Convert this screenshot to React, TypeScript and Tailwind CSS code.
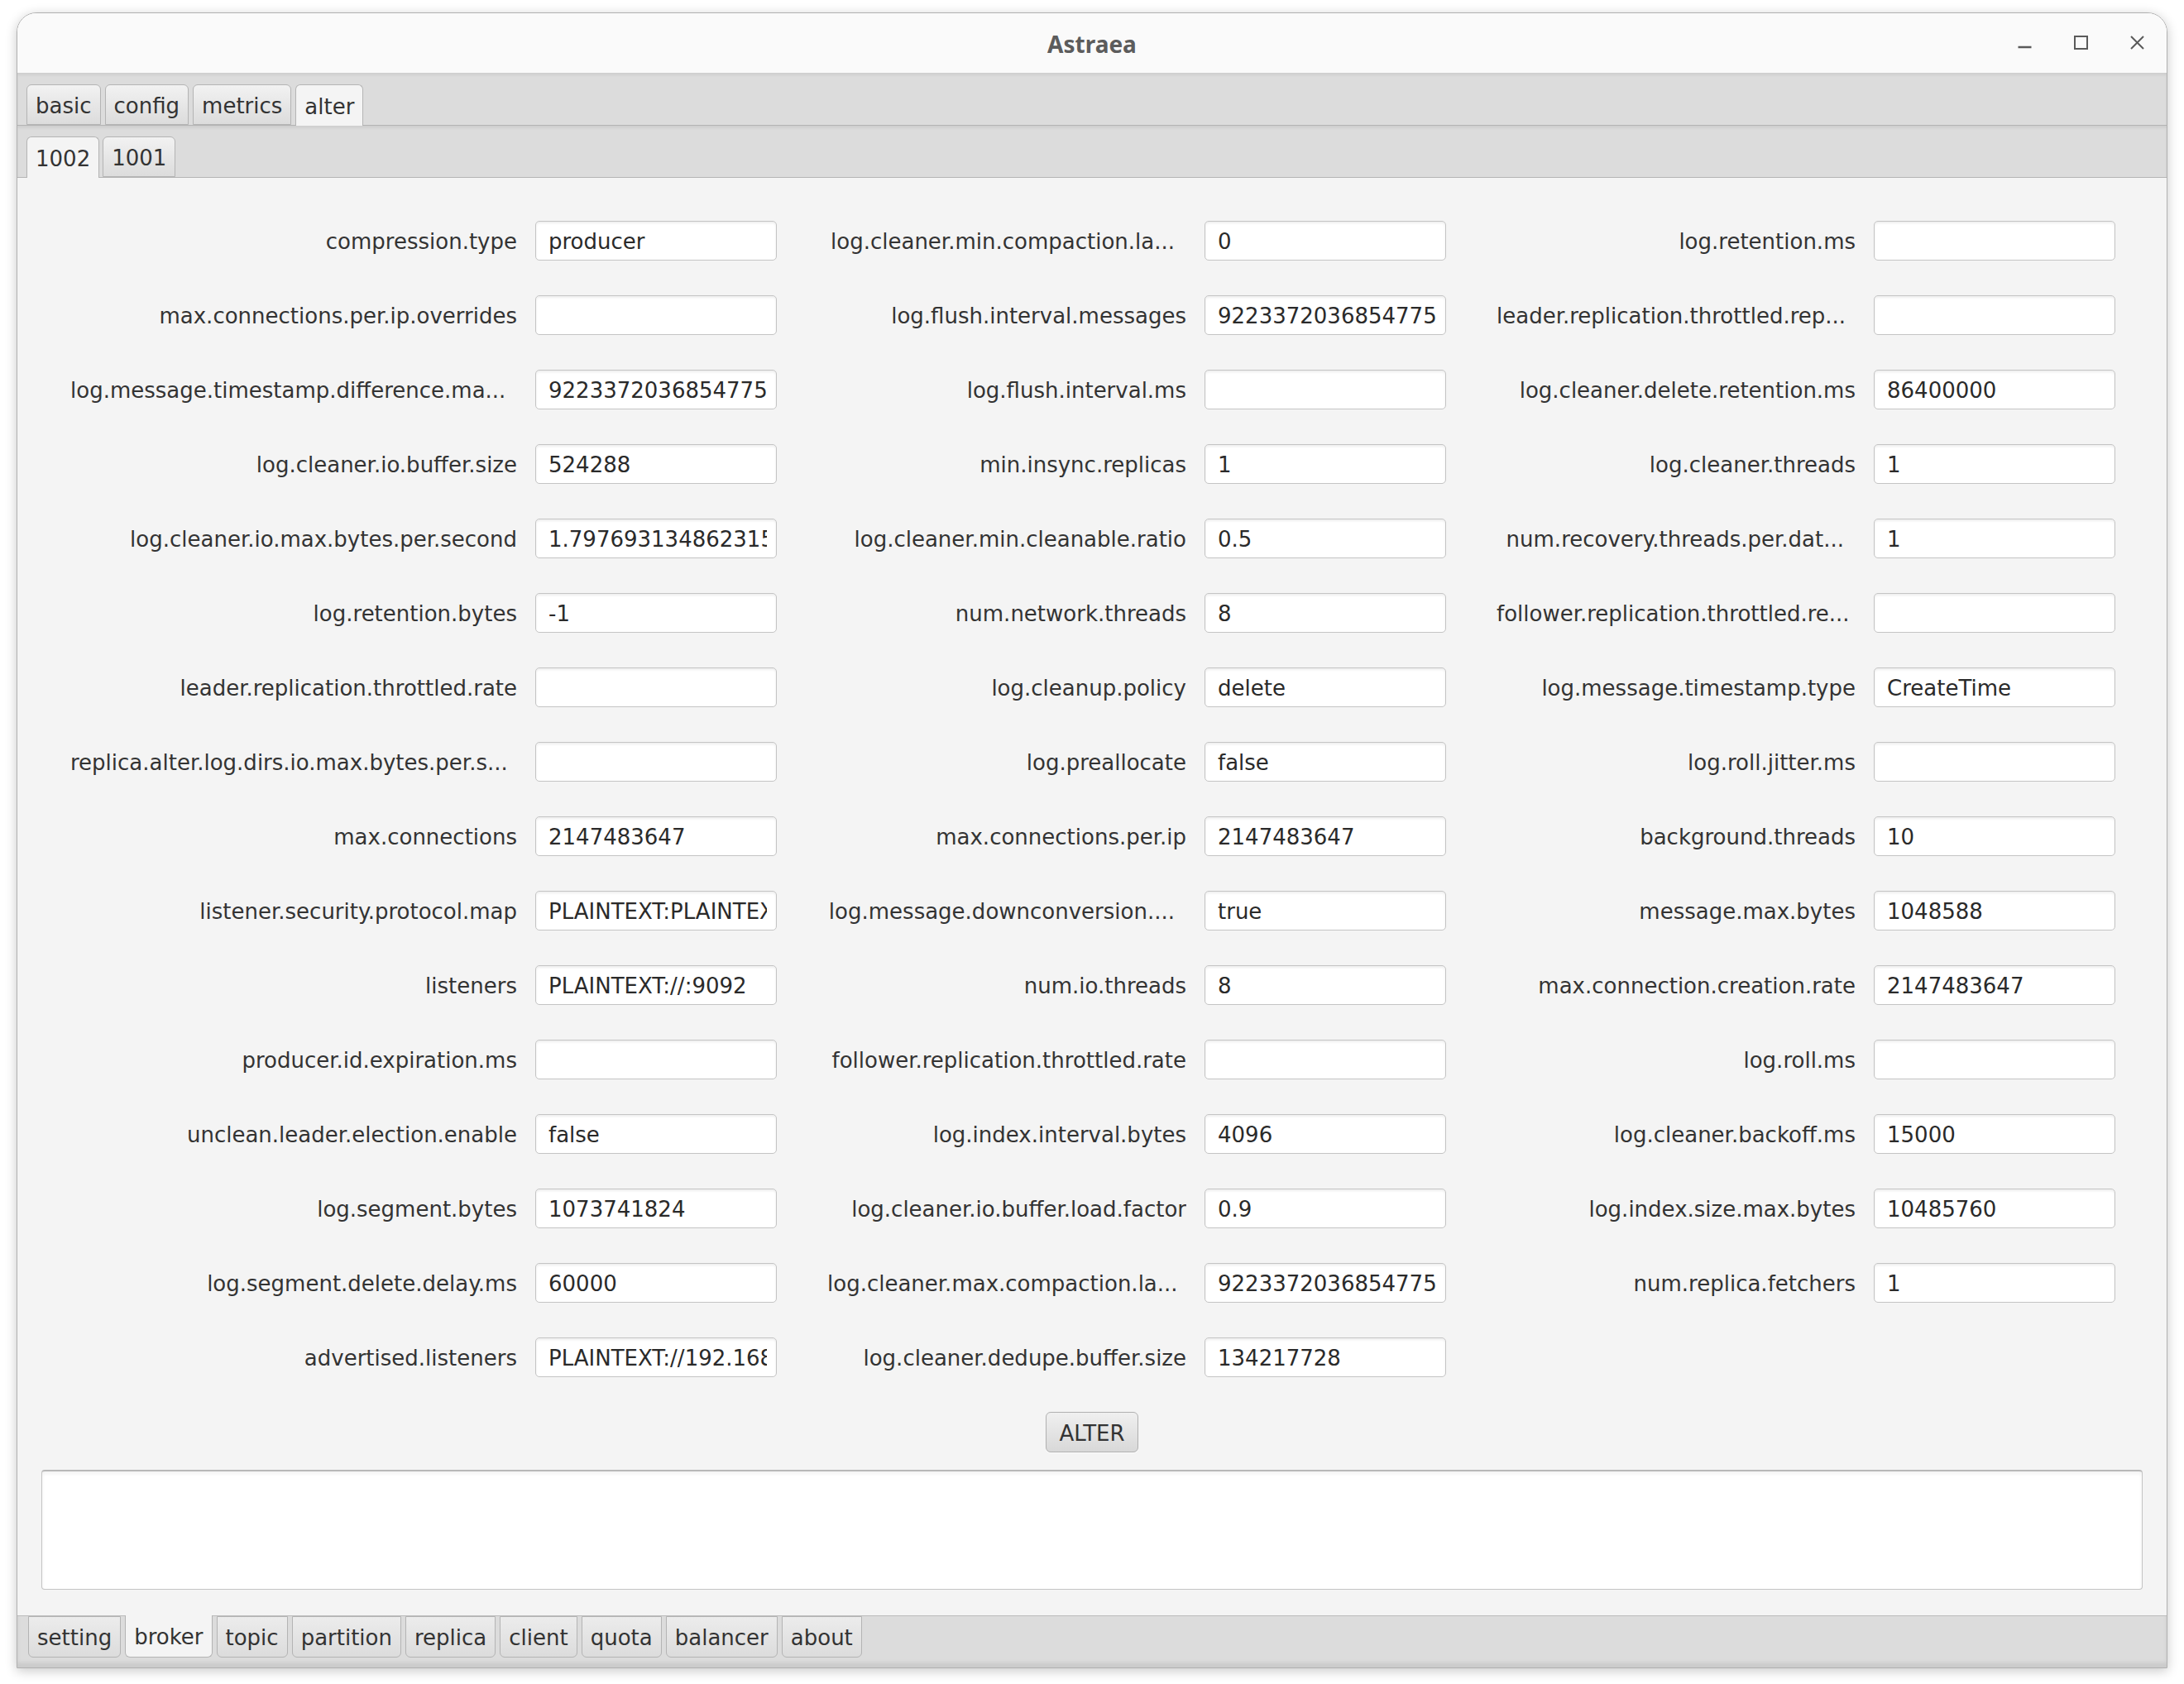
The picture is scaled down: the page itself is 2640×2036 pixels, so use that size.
const fields: [string, string][] = [
  ["compression.type", "producer"],
  ["log.cleaner.min.compaction.la...", "0"],
  ["log.retention.ms", ""],
  ["max.connections.per.ip.overrides", ""],
  ["log.flush.interval.messages", "9223372036854775807"],
  ["leader.replication.throttled.rep...", ""],
  ["log.message.timestamp.difference.ma...", "9223372036854775807"],
  ["log.flush.interval.ms", ""],
  ["log.cleaner.delete.retention.ms", "86400000"],
  ["log.cleaner.io.buffer.size", "524288"],
  ["min.insync.replicas", "1"],
  ["log.cleaner.threads", "1"],
  ["log.cleaner.io.max.bytes.per.second", "1.7976931348623157E308"],
  ["log.cleaner.min.cleanable.ratio", "0.5"],
  ["num.recovery.threads.per.dat...", "1"],
  ["log.retention.bytes", "-1"],
  ["num.network.threads", "8"],
  ["follower.replication.throttled.re...", ""],
  ["leader.replication.throttled.rate", ""],
  ["log.cleanup.policy", "delete"],
  ["log.message.timestamp.type", "CreateTime"],
  ["replica.alter.log.dirs.io.max.bytes.per.s...", ""],
  ["log.preallocate", "false"],
  ["log.roll.jitter.ms", ""],
  ["max.connections", "2147483647"],
  ["max.connections.per.ip", "2147483647"],
  ["background.threads", "10"],
  ["listener.security.protocol.map", "PLAINTEXT:PLAINTEXT,SSL:SSL"],
  ["log.message.downconversion....", "true"],
  ["message.max.bytes", "1048588"],
  ["listeners", "PLAINTEXT://:9092"],
  ["num.io.threads", "8"],
  ["max.connection.creation.rate", "2147483647"],
  ["producer.id.expiration.ms", ""],
  ["follower.replication.throttled.rate", ""],
  ["log.roll.ms", ""],
  ["unclean.leader.election.enable", "false"],
  ["log.index.interval.bytes", "4096"],
  ["log.cleaner.backoff.ms", "15000"],
  ["log.segment.bytes", "1073741824"],
  ["log.cleaner.io.buffer.load.factor", "0.9"],
  ["log.index.size.max.bytes", "10485760"],
  ["log.segment.delete.delay.ms", "60000"],
  ["log.cleaner.max.compaction.la...", "9223372036854775807"],
  ["num.replica.fetchers", "1"],
  ["advertised.listeners", "PLAINTEXT://192.168.1.10:9092"],
  ["log.cleaner.dedupe.buffer.size", "134217728"],
];

const tabBase =
  "flex items-center px-[10px] pt-[2px] border border-[#b4b4b4] text-[#333] whitespace-nowrap leading-[32px]";

function TopTab({ label, selected }: { label: string; selected?: boolean }) {
  return (
    <div
      className={
        tabBase +
        " rounded-t-[6px] " +
        (selected
          ? "h-[50px] -mb-px border-b-0 bg-[#f4f4f4]"
          : "h-[49px] bg-gradient-to-b from-[#f2f2f2] to-[#dcdcdc]")
      }
    >
      {label}
    </div>
  );
}

function BottomTab({ label, selected }: { label: string; selected?: boolean }) {
  return (
    <div
      className={
        tabBase +
        " rounded-b-[6px] " +
        (selected
          ? "h-[51px] -mt-px border-t-0 bg-[#f4f4f4]"
          : "h-[50px] bg-gradient-to-b from-[#ececec] to-[#dcdcdc]")
      }
    >
      {label}
    </div>
  );
}

function Field({ label, value, wide }: { label: string; value: string; wide?: boolean }) {
  const cut = label.endsWith("...");
  return (
    <div className="flex items-center gap-[22px] h-[90px]">
      <div
        className={
          (wide ? "w-[540px]" : "w-[434px]") +
          (cut ? " pr-[14px]" : "") +
          " text-right whitespace-nowrap overflow-hidden text-[#333] leading-[34px] pt-[2px]"
        }
      >
        {label}
      </div>
      <div className="w-[292px] h-[48px] bg-white border border-[#c4c4c4] rounded-[5px] pl-[15px] pr-[11px] pt-[2px] flex items-center shadow-[inset_0_2px_3px_rgba(0,0,0,0.07)]">
        <div className="overflow-hidden whitespace-nowrap text-[#2a2a2a] leading-[34px]">{value}</div>
      </div>
    </div>
  );
}

export default function App() {
  return (
    <div
      className="w-[2640px] h-[2036px] bg-white pt-[15px] pl-[20px] text-[26px] leading-none"
      style={{ fontFamily: '"DejaVu Sans", sans-serif' }}
    >
      <div className="w-[2600px] h-[2002px] border border-[#b0b0b0] rounded-t-[24px] flex flex-col overflow-hidden shadow-[0_3px_14px_rgba(0,0,0,0.22)]">
        {/* title bar */}
        <div className="h-[72px] bg-[#fafafa] flex items-center relative">
          <div
            className="flex-1 text-center text-[28px] font-bold text-[#5c5c5c] pt-[2px] leading-[40px]"
            style={{ fontFamily: '"Noto Sans", sans-serif' }}
          >
            Astraea
          </div>
          <div className="absolute right-[27px] top-[27px] flex items-center gap-[51px]">
            <svg width="17" height="17" viewBox="0 0 17 17">
              <line x1="0.5" y1="14" x2="16.5" y2="14" stroke="#5a5a5a" strokeWidth="2.4" />
            </svg>
            <svg width="17" height="17" viewBox="0 0 17 17">
              <rect x="1" y="1" width="15" height="15" fill="none" stroke="#5a5a5a" strokeWidth="2" />
            </svg>
            <svg width="17" height="17" viewBox="0 0 17 17">
              <path d="M1 1 L16 16 M16 1 L1 16" stroke="#5a5a5a" strokeWidth="2" />
            </svg>
          </div>
        </div>

        {/* top tabs */}
        <div className="h-[64px] bg-[#dcdcdc] border-b border-[#b4b4b4] flex items-end pl-[11px] gap-[5px] shadow-[inset_0_3px_3px_rgba(0,0,0,0.06)]">
          <TopTab label="basic" />
          <TopTab label="config" />
          <TopTab label="metrics" />
          <TopTab label="alter" selected />
        </div>

        {/* broker tabs */}
        <div className="h-[63px] bg-[#dcdcdc] border-b border-[#b4b4b4] flex items-end pl-[11px] gap-[4px] shadow-[inset_0_3px_3px_rgba(0,0,0,0.06)]">
          <TopTab label="1002" selected />
          <TopTab label="1001" />
        </div>

        {/* content */}
        <div className="flex-1 bg-[#f4f4f4] flex flex-col">
          <div className="pt-[31px] pl-[64px] grid grid-cols-[854px_748px_748px] gap-x-[61px]">
            {fields.map(([label, value], i) => (
              <Field key={label + i} label={label} value={value} wide={i % 3 === 0} />
            ))}
          </div>
          <div className="mt-[21px] flex justify-center">
            <button className="h-[49px] px-[15px] pt-[2px] border border-[#b0b0b0] rounded-[6px] bg-gradient-to-b from-[#f0f0f0] to-[#d8d8d8] text-[#333] leading-[32px] shadow-[0_1px_0_rgba(255,255,255,0.9)]">
              ALTER
            </button>
          </div>
          <div className="mt-[21px] mx-[29px] h-[145px] bg-white border border-[#c4c4c4] border-t-2 border-t-[#b8b8b8] rounded-[4px] shadow-[inset_0_3px_4px_rgba(0,0,0,0.05)]" />
        </div>

        {/* bottom tabs */}
        <div className="h-[63px] bg-[#dcdcdc] border-t border-[#bcbcbc] flex items-start pl-[13px] gap-[5px] shadow-[inset_0_-6px_4px_rgba(0,0,0,0.08)]">
          <BottomTab label="setting" />
          <BottomTab label="broker" selected />
          <BottomTab label="topic" />
          <BottomTab label="partition" />
          <BottomTab label="replica" />
          <BottomTab label="client" />
          <BottomTab label="quota" />
          <BottomTab label="balancer" />
          <BottomTab label="about" />
        </div>
      </div>
    </div>
  );
}
